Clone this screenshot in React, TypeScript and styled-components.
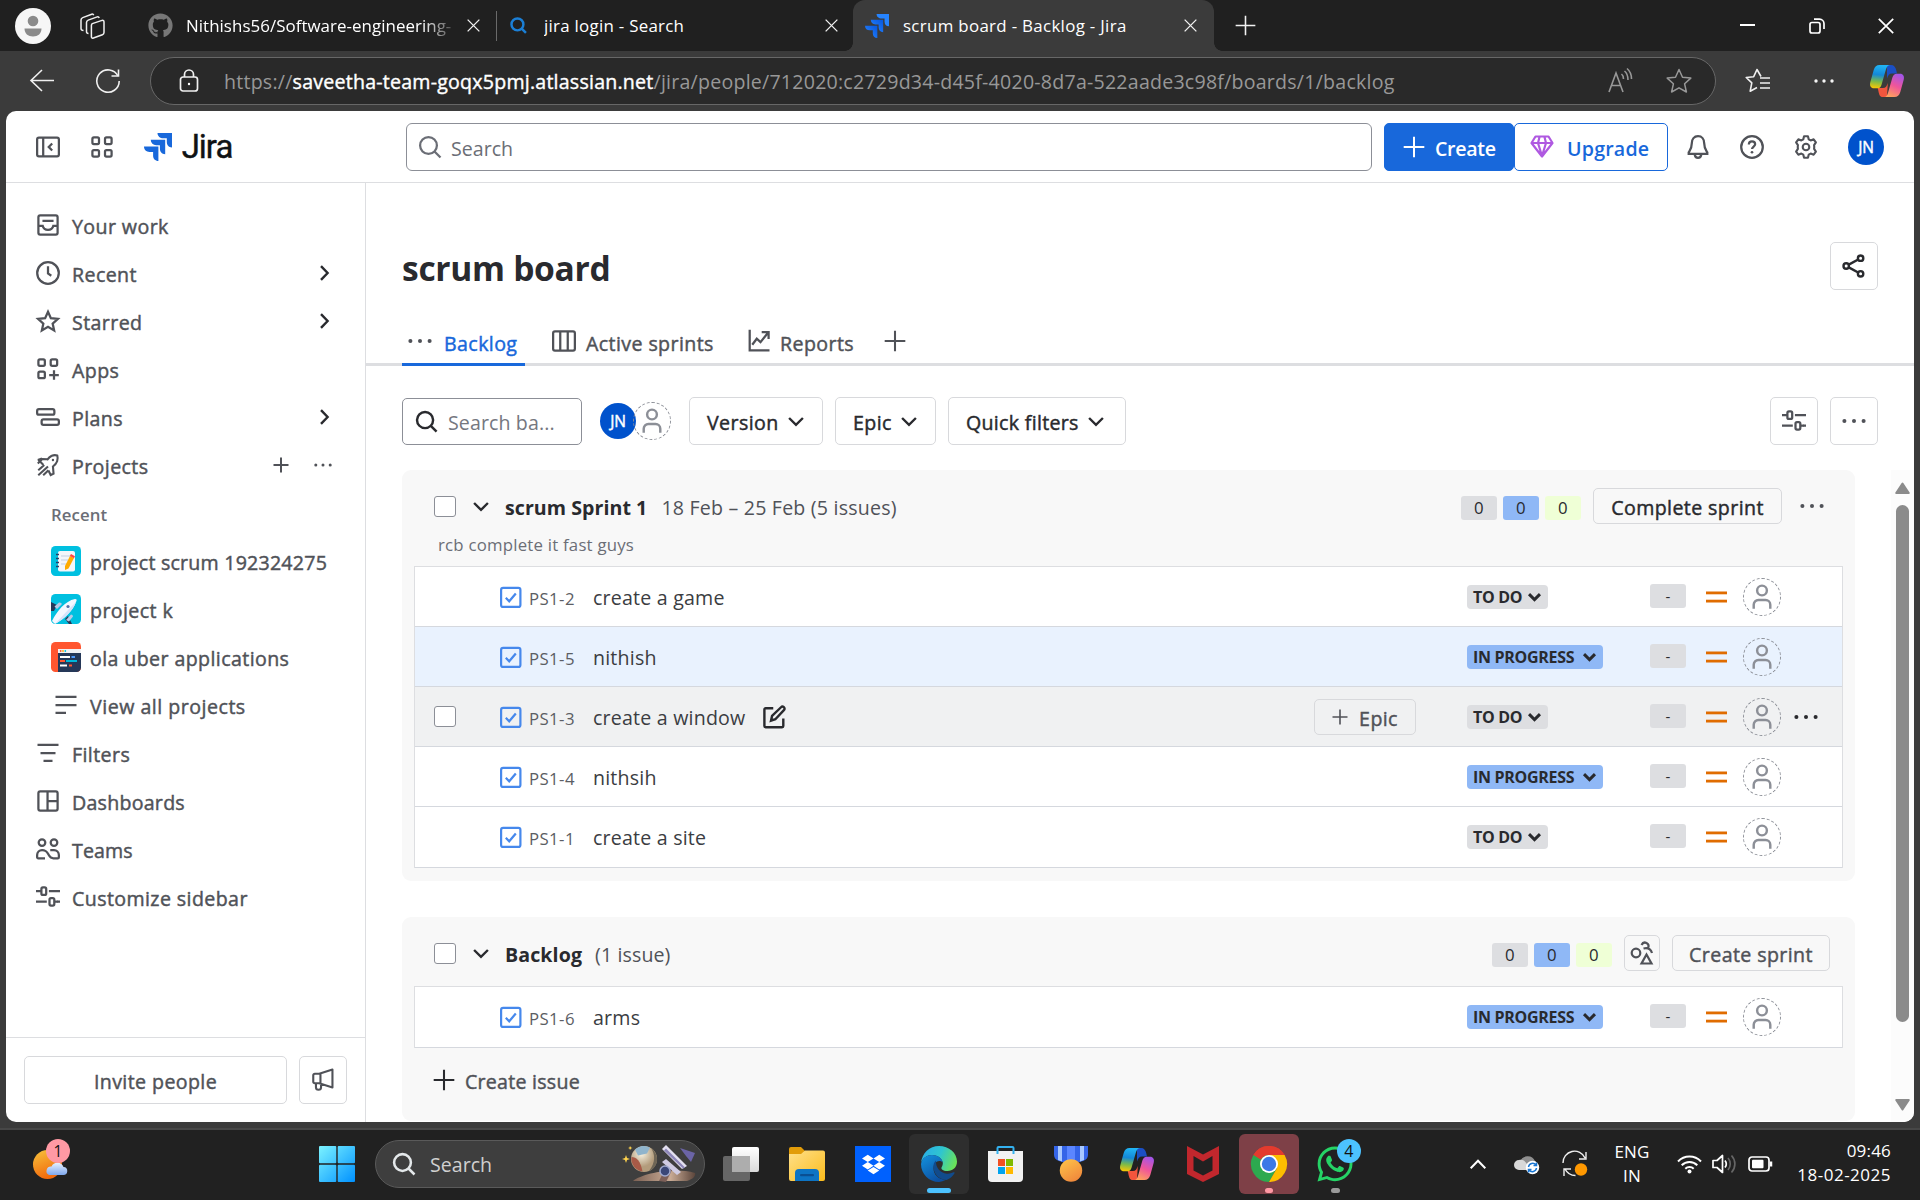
import React from "react";
import styled, { createGlobalStyle, css } from "styled-components";
import { FaGithub, FaWhatsapp, FaDropbox } from "react-icons/fa";

const GlobalStyle = createGlobalStyle`
  *, *::before, *::after { box-sizing: border-box; }
  body { margin: 0; background: #202020; }
  #root { font-family: "Open Sans", "Noto Sans", sans-serif; }
`;

/* ---------- primitives ---------- */

const Desktop = styled.div`
  width: 1920px;
  height: 1200px;
  overflow: hidden;
  display: flex;
  flex-direction: column;
  background: #3b3b3b;
  color: #292a2e;
`;

type TextProps = { $size?: number; $weight?: number; $color?: string; $ls?: number; $drop?: number };
/* Weight 500 is drawn as the regular face with a hairline stroke, since the family has no medium cut. */
const Text = styled.span<TextProps>`
  font-size: ${(p) => p.$size ?? 19.6}px;
  font-weight: ${(p) => p.$weight ?? 500};
  color: ${(p) => p.$color ?? "inherit"};
  letter-spacing: ${(p) => p.$ls ?? ((p.$weight ?? 500) === 500 ? 0.4 : 0.2)}px;
  -webkit-text-stroke: ${(p) => ((p.$weight ?? 500) === 500 ? 0.45 : 0)}px currentColor;
  padding-top: ${(p) => p.$drop ?? 4}px;
  line-height: 26px;
  white-space: pre;
  flex: none;
`;

const Slot = styled.div<{ $w: number; $ml?: number; $h?: number }>`
  width: ${(p) => p.$w}px;
  height: ${(p) => (p.$h ? p.$h + "px" : "auto")};
  margin-left: ${(p) => p.$ml ?? 0}px;
  flex: none;
  display: flex;
  align-items: center;
  justify-content: center;
`;

const Push = styled.div`
  flex: 1;
`;

const Svg = styled.svg`
  display: block;
  flex: none;
  overflow: visible;
`;

type IconProps = { size?: number; color?: string; sw?: number; children?: React.ReactNode };
const Icon16 = ({ size = 24, color = "#505258", sw = 1.5, children }: IconProps) => (
  <Svg width={size} height={size} viewBox="0 0 16 16" fill="none" stroke={color} strokeWidth={sw}>
    {children}
  </Svg>
);

const PlusIcon = ({ size = 22, color = "#505258", sw = 1.5 }: IconProps) => (
  <Icon16 size={size} color={color} sw={sw}><path d="M8 0.5v15M0.5 8h15" /></Icon16>
);
const DotsIcon = ({ color = "#505258", size = 24 }: IconProps) => (
  <Icon16 size={size} color="none">
    <g fill={color}><circle cx="1.6" cy="8" r="1.35" /><circle cx="8" cy="8" r="1.35" /><circle cx="14.4" cy="8" r="1.35" /></g>
  </Icon16>
);
const ChevronDown = ({ size = 24, color = "#292a2e", sw = 1.6 }: IconProps) => (
  <Icon16 size={size} color={color} sw={sw}><path d="M3.4 6l4.6 4.6L12.6 6" /></Icon16>
);
const ChevronRight = () => (
  <Icon16 color="#292a2e" sw={1.6}><path d="M6 3.4l4.4 4.6L6 12.6" /></Icon16>
);
const SearchIcon = ({ color = "#505258", size = 24, sw = 1.5 }: IconProps) => (
  <Icon16 size={size} color={color} sw={sw}><circle cx="7" cy="7" r="5.6" /><path d="M11 11l4 4" /></Icon16>
);
const SlidersIcon = () => (
  <Icon16><rect x="3.6" y="1.6" width="3.2" height="5" rx="1" /><path d="M0 4.1h3.6M8.6 4.1H16M0 11.1h7.2M14 11.1h2" /><rect x="9" y="8.7" width="3.2" height="5" rx="1" /><path d="M12.4 11.1h2" /></Icon16>
);
const PersonIcon = ({ color = "#8c8f97" }: IconProps) => (
  <Icon16 color={color} size={26}><circle cx="8" cy="4" r="3" /><path d="M2.9 15.2v-2.4a2.9 2.9 0 0 1 2.9-2.9h4.4a2.9 2.9 0 0 1 2.9 2.9v2.4" /></Icon16>
);
const CloseIcon = ({ size = 13, color = "#f2f2f2", sw = 1.6 }: IconProps) => (
  <Icon16 size={size} color={color} sw={sw}><path d="M0.8 0.8l14.4 14.4M15.2 0.8L0.8 15.2" /></Icon16>
);

const JiraMark = ({ size, id }: { size: number; id?: string }) => (
  <Svg width={size} height={size} viewBox="0 0 28 28">
    <defs>
      <linearGradient id={id ?? "jm"} x1="1" y1="0" x2="0" y2="1">
        <stop offset="0.1" stopColor={id ? "#0a5be0" : "#1868db"} /><stop offset="0.9" stopColor={id ? "#2684ff" : "#1868db"} />
      </linearGradient>
    </defs>
    <path d="M13.5 0H28v14.4c-3.5 0-5.2-2.6-5.2-5.4V5.3h-3.6C16.2 5.3 13.5 3.3 13.5 0z" fill={id ? "#2684ff" : "#1868db"} />
    <path d="M6.8 6.8h14.4v14.4c-3.4 0-5.3-2.5-5.3-5.4v-3.6h-3.7C9.3 12.2 6.8 10 6.8 6.8z" fill={`url(#${id ?? "jm"})`} />
    <path d="M0 13.6h14.4V28c-3.3 0-5.3-2.5-5.3-5.3V19H5.5C2.4 19 0 16.9 0 13.6z" fill={`url(#${id ?? "jm"})`} />
  </Svg>
);

const CopilotMark = ({ size, id }: { size: number; id: string }) => (
  <Svg width={size} height={size} viewBox="0 0 34 32">
    <defs>
      <linearGradient id={id + "a"} x1="0.3" y1="0" x2="0.2" y2="1">
        <stop offset="0" stopColor="#20b4f4" /><stop offset="0.4" stopColor="#1488d8" /><stop offset="0.7" stopColor="#7cba4a" /><stop offset="1" stopColor="#ffc800" />
      </linearGradient>
      <linearGradient id={id + "b"} x1="0.7" y1="0" x2="0.3" y2="1">
        <stop offset="0" stopColor="#a455e8" /><stop offset="0.5" stopColor="#f0559a" /><stop offset="1" stopColor="#ffa35c" />
      </linearGradient>
    </defs>
    <path d="M17 0h4c3 0 4.5 2 5.2 5l.8 3.5h-5c-3 0-4 2-5 5z" fill="#1b4fc4" />
    <path d="M17 32h-4c-3 0-3.7-2-4.4-5l-.8-4h5c3 0 4-2 5-5z" fill="#f2553d" />
    <path d="M9.5 0H20c-2.5 0-3.4 2.3-4.1 4.6l-4.3 14.8c-.8 2.6-2 3.9-4.6 3.9H4c-3.2 0-4.6-2.5-3.7-6L3.7 5C4.8 1.500 6.500 0 9.500 0z" fill={`url(#${id}a)`} />
    <path d="M24.5 32H14c2.5 0 3.4-2.3 4.1-4.6l4.3-14.8c.8-2.6 2-3.9 4.6-3.9h3c3.2 0 4.6 2.5 3.7 6L30.3 27c-1.1 3.5-2.8 5-5.8 5z" fill={`url(#${id}b)`} />
  </Svg>
);

/* ---------- browser tab strip ---------- */

const TabStrip = styled.header`
  height: 51px;
  flex: none;
  display: flex;
  align-items: center;
  background: #202020;
  color: #fff;
`;
const ProfileCircle = styled.div`
  width: 36px;
  height: 36px;
  border-radius: 50%;
  background: #f6f6f6;
  display: flex;
  align-items: center;
  justify-content: center;
`;
const BrowserTab = styled.div<{ $w: number; $active?: boolean }>`
  width: ${(p) => p.$w}px;
  height: 51px;
  display: flex;
  align-items: center;
  flex: none;
  position: relative;
  ${(p) =>
    p.$active &&
    css`
      background: #3b3b3b;
      border-radius: 12px 12px 0 0;
      &::before, &::after {
        content: "";
        position: absolute;
        bottom: 0;
        width: 8px;
        height: 8px;
      }
      &::before { left: -8px; background: radial-gradient(circle at 0 0, transparent 7.5px, #3b3b3b 8px); }
      &::after { right: -8px; background: radial-gradient(circle at 100% 0, transparent 7.5px, #3b3b3b 8px); }
    `}
`;
const TabTitle = styled(Text)<{ $w: number; $fade?: boolean }>`
  width: ${(p) => p.$w}px;
  overflow: hidden;
  ${(p) => p.$fade && css`mask-image: linear-gradient(to right, #000 88%, transparent 102%);`}
`;
const TabDivider = styled.div`
  width: 1px;
  height: 30px;
  background: #6a6a6a;
`;

const BrowserTabs = () => (
  <TabStrip>
    <Slot $w={36} $ml={15}>
      <ProfileCircle>
        <Svg width={18} height={22} viewBox="0 0 18 22" fill="#8a8a8a"><circle cx="9" cy="6" r="5.3" /><path d="M.5 13.5h17c0 5-3.5 8-8.5 8s-8.5-3-8.5-8z" /></Svg>
      </ProfileCircle>
    </Slot>
    <Slot $w={26} $ml={28}>
      <Svg width={26} height={28} viewBox="0 0 26 28" fill="none" stroke="#f0f0f0" strokeWidth="1.5" strokeLinejoin="round">
        <path d="M13.300 11.600l9.700-3.200q2-.5 2 1.500v10.500q0 1.700-1.600 2.300l-9 3.300q-2 .6-2-1.500V13.500q0-1.400.9-1.900z" />
        <path d="M9.500 21.500q-2 0-2-2V10.500q0-1.800 1.700-2.400l9-3.200q1.500-.4 2 1" />
        <path d="M4.500 18.500q-2.500 0-2.500-2V8q0-1.800 1.700-2.400l9-3.400q1.500-.4 2 1" />
      </Svg>
    </Slot>
    <Slot $w={1} />
    <BrowserTab $w={354}>
      <Slot $w={26} $ml={41}><FaGithub size={25} color="#777" /></Slot>
      <Slot $w={13} />
      <TabTitle $w={268} $fade $size={16.9} $weight={400} $ls={0.05} $drop={0}>Nithishs56/Software-engineering-</TabTitle>
      <Slot $w={13} $ml={13}><CloseIcon /></Slot>
    </BrowserTab>
    <Slot $w={1} $ml={36}><TabDivider /></Slot>
    <BrowserTab $w={356}>
      <Slot $w={18} $ml={12}><SearchIcon size={17} color="#1b7fd6" sw={2.3} /></Slot>
      <Slot $w={17} />
      <TabTitle $w={269} $size={16.9} $weight={400} $ls={0.27} $drop={0}>jira login - Search</TabTitle>
      <Slot $w={13} $ml={12}><CloseIcon /></Slot>
    </BrowserTab>
    <BrowserTab $w={361} $active>
      <Slot $w={24} $ml={12}><JiraMark size={24} id="tabjira" /></Slot>
      <Slot $w={14} />
      <TabTitle $w={269} $size={16.9} $weight={400} $ls={0.31} $drop={0}>scrum board - Backlog - Jira</TabTitle>
      <Slot $w={13} $ml={12}><CloseIcon /></Slot>
    </BrowserTab>
    <Slot $w={22} $ml={20}><PlusIcon size={21} color="#f2f2f2" sw={1.2} /></Slot>
    <Push />
    <Slot $w={16}><Svg width={16} height={4}><rect y="0" width="15" height="2" fill="#fff" /></Svg></Slot>
    <Slot $w={16} $ml={53}>
      <Svg width={16} height={16} viewBox="0 0 16 16" fill="none" stroke="#fff" strokeWidth="1.7"><rect x="1" y="4.5" width="10" height="10.5" rx="2" /><path d="M5 1.2h5.500c2.600 0 4.500 2 4.500 4.500V11" /></Svg>
    </Slot>
    <Slot $w={16} $ml={53} style={{ marginRight: 26 }}><CloseIcon size={16} sw={1.7} color="#fff" /></Slot>
  </TabStrip>
);

/* ---------- address bar ---------- */

const Toolbar = styled.div`
  height: 60px;
  flex: none;
  display: flex;
  align-items: center;
`;
const AddressPill = styled.div`
  width: 1566px;
  height: 48px;
  margin-left: 30px;
  display: flex;
  align-items: center;
  background: #292929;
  border: 1px solid #676767;
  border-radius: 24px;
`;
const Url = styled(Text)`
  b { font-weight: 400; color: #fff; -webkit-text-stroke: 0.4px #fff; }
`;

const AddressBar = () => (
  <Toolbar>
    <Slot $w={24} $ml={30}>
      <Svg width={24} height={24} viewBox="0 0 24 24" fill="none" stroke="#f0f0f0" strokeWidth="1.6"><path d="M24 11.500H1M12 1L1 11.500 12 22" /></Svg>
    </Slot>
    <Slot $w={24} $ml={42}>
      <Svg width={24} height={24} viewBox="0 0 24 24" fill="none" stroke="#f0f0f0" strokeWidth="1.6"><path d="M22 7A11.200 11.200 0 1 0 23.200 12" /><path d="M22.500 .5V7h-7" /></Svg>
    </Slot>
    <AddressPill>
      <Slot $w={20} $ml={28}>
        <Svg width={20} height={24} viewBox="0 0 20 24" fill="none" stroke="#f0f0f0" strokeWidth="1.7"><rect x="1.500" y="8" width="17" height="14" rx="2.500" /><path d="M5.500 8V5.500a4.500 4.500 0 0 1 9 0V8" /><circle cx="10" cy="15" r="1.200" fill="#fff" stroke="none" /></Svg>
      </Slot>
      <Slot $w={25} />
      <Url $size={19.6} $weight={400} $color="#989898" $ls={0.22} $drop={1}>
        https://<b>saveetha-team-goqx5pmj.atlassian.net</b>/jira/people/712020:c2729d34-d45f-4020-8d7a-522aade3c98f/boards/1/backlog
      </Url>
      <Push />
      <Slot $w={24}>
        <Svg width={24} height={24} viewBox="0 0 24 24" fill="none" stroke="#989898" strokeWidth="1.6"><path d="M1 23L8 4l7 19M3.500 16.500h9M13.500 5c1.500 1.200 2 3 2 5M16.500 2c2.500 2 3.500 5 3.500 9M19-.5c3 2.500 4.500 6 4.500 10.500" /></Svg>
      </Slot>
      <Slot $w={26} $ml={34} style={{ marginRight: 23 }}>
        <Svg width={26} height={26} viewBox="0 0 26 26" fill="none" stroke="#989898" strokeWidth="1.5" strokeLinejoin="round"><path d="M13 1.500l3.500 7.700 8.300.9-6.200 5.700 1.800 8.200L13 19.800 5.600 24l1.800-8.200-6.200-5.700 8.300-.9z" /></Svg>
      </Slot>
    </AddressPill>
    <Slot $w={26} $ml={29}>
      <Svg width={26} height={26} viewBox="0 0 26 26" fill="none" stroke="#f0f0f0" strokeWidth="1.6" strokeLinejoin="round"><path d="M16 8.500L12 1.500 8.700 8.700l-7.500.8 5.600 5.300-1.600 8.400L12 19.500" /><path d="M15 10h10M15 15h10M15 20h10" /></Svg>
    </Slot>
    <Slot $w={22} $ml={42}><DotsIcon size={20} color="#f5f5f5" /></Slot>
    <Slot $w={34} $ml={35}><CopilotMark size={34} id="cpa" /></Slot>
  </Toolbar>
);

/* ---------- page shell ---------- */

const Page = styled.div`
  width: 1908px;
  height: 1011px;
  margin-left: 6px;
  flex: none;
  background: #fff;
  border-radius: 10px;
  overflow: hidden;
  display: flex;
  flex-direction: column;
`;
const AppHeader = styled.div`
  height: 72px;
  flex: none;
  display: flex;
  align-items: center;
  border-bottom: 1px solid #dddee1;
`;
const Wordmark = styled.span`
  font-family: Roboto, "Liberation Sans", sans-serif;
  font-size: 33px;
  font-weight: 400;
  letter-spacing: -1px;
  line-height: 36px;
  color: #101214;
  -webkit-text-stroke: 0.4px #101214;
`;
const GlobalSearch = styled.div`
  width: 966px;
  height: 48px;
  margin-left: 174px;
  padding-left: 11px;
  display: flex;
  align-items: center;
  gap: 9px;
  border: 1px solid #8c8f97;
  border-radius: 6px;
`;
const HeaderButton = styled.div<{ $primary?: boolean; $w: number }>`
  width: ${(p) => p.$w}px;
  height: 48px;
  display: flex;
  align-items: center;
  flex: none;
  border: 1px solid #1868db;
  border-radius: 5px;
  background: ${(p) => (p.$primary ? "#1868db" : "#fff")};
  color: ${(p) => (p.$primary ? "#fff" : "#1868db")};
`;
const Avatar = styled.div`
  width: 36px;
  height: 36px;
  flex: none;
  display: flex;
  align-items: center;
  justify-content: center;
  border-radius: 50%;
  background: #0052cc;
  color: #fff;
`;

const TopNav = () => (
  <AppHeader>
    <Slot $w={24} $ml={30}><Icon16><rect x=".75" y="1.750" width="14.500" height="12.500" rx="1.200" /><path d="M4.800 2v12M10.800 5.700L8.500 8l2.300 2.300" /></Icon16></Slot>
    <Slot $w={24} $ml={30}>
      <Icon16><rect x="1.600" y="1.600" width="4.400" height="4.400" rx="1" /><rect x="10" y="1.600" width="4.400" height="4.400" rx="1" /><rect x="1.600" y="10" width="4.400" height="4.400" rx="1" /><rect x="10" y="10" width="4.400" height="4.400" rx="1" /></Icon16>
    </Slot>
    <Slot $w={28} $ml={30}><JiraMark size={28} /></Slot>
    <Slot $w={50} $ml={10}><Wordmark>Jira</Wordmark></Slot>
    <GlobalSearch>
      <SearchIcon color="#6b6e76" />
      <Text $weight={400} $ls={0} $color="#6b6e76">Search</Text>
    </GlobalSearch>
    <Slot $w={12} />
    <HeaderButton $primary $w={130}>
      <Slot $w={22} $ml={18}><PlusIcon size={22} color="#fff" /></Slot>
      <Slot $w={10} />
      <Text $weight={600} $ls={-0.3}>Create</Text>
    </HeaderButton>
    <HeaderButton $w={154}>
      <Slot $w={24} $ml={15}>
        <Svg width={24} height={24} viewBox="0 0 24 24" fill="none" stroke="#af59e1" strokeWidth="2.2" strokeLinejoin="round"><path d="M5.500 1.500h13l4 6.500L12 21.500 1.500 8zM1.500 8h21M9.500 2L8 8l4 13M14.500 2L16 8l-4 13" /></Svg>
      </Slot>
      <Slot $w={13} />
      <Text $weight={600} $ls={0.2}>Upgrade</Text>
    </HeaderButton>
    <Slot $w={24} $ml={18}><Icon16><path d="M8 .8c2.600 0 4.100 1.900 4.100 4.600 0 3.300.9 4.300 2.100 6.200v1H1.800v-1c1.200-1.900 2.100-2.900 2.100-6.200C3.900 2.700 5.400.8 8 .8zM5.800 13c.2 1.500 1 2.200 2.200 2.200s2-.7 2.200-2.200" /></Icon16></Slot>
    <Slot $w={24} $ml={30}><Icon16><circle cx="8" cy="8" r="7.200" /><path d="M5.900 6.400c0-1.300.9-2.100 2.100-2.100s2.100.8 2.100 1.900c0 1.500-2.100 1.500-2.100 3.200" /><circle cx="8" cy="11.500" r=".9" fill="#505258" stroke="none" /></Icon16></Slot>
    <Slot $w={24} $ml={30}>
      <Icon16 sw={1.4}><path strokeLinejoin="round" d="M6.700 .8h2.600l.5 2.100 1.300.7 2-.7 1.500 2-1.200 1.800.1 1.300-.1 1.300 1.200 1.800-1.500 2-2-.7-1.300.7-.5 2.100H6.700l-.5-2.100-1.300-.7-2 .7-1.500-2 1.200-1.800L2.500 8l.1-1.300L1.400 4.900l1.500-2 2 .7 1.300-.7z" /><circle cx="8" cy="8" r="2.200" /></Icon16>
    </Slot>
    <Slot $w={36} $ml={30}><Avatar><Text $size={15.5} $ls={-0.2} $drop={0}>JN</Text></Avatar></Slot>
  </AppHeader>
);

const Body = styled.div`
  flex: 1;
  display: flex;
  min-height: 0;
`;

/* ---------- sidebar ---------- */

const Sidebar = styled.nav`
  width: 360px;
  flex: none;
  display: flex;
  flex-direction: column;
  padding-top: 18px;
  border-right: 1px solid #dddee1;
  color: #505258;
`;
const NavItem = styled.div<{ $nested?: boolean }>`
  height: 48px;
  flex: none;
  display: flex;
  align-items: center;
  padding-left: ${(p) => (p.$nested ? 45 : 30)}px;
  padding-right: 29px;
`;
const NavIcon = styled.div<{ $w: number; $gap: number }>`
  width: ${(p) => p.$w}px;
  margin-right: ${(p) => p.$gap}px;
  display: flex;
  justify-content: center;
`;
const SidebarFooter = styled.div`
  height: 85px;
  margin-top: auto;
  flex: none;
  display: flex;
  align-items: center;
  gap: 12px;
  padding: 0 18px;
  border-top: 1px solid #dddee1;
`;
const OutlineButton = styled.div<{ $w: number; $h?: number; $radius?: number; $color?: string }>`
  width: ${(p) => p.$w}px;
  height: ${(p) => p.$h ?? 48}px;
  flex: none;
  display: flex;
  align-items: center;
  justify-content: center;
  border: 1px solid #d8d9dc;
  border-radius: ${(p) => p.$radius ?? 5}px;
  color: ${(p) => p.$color ?? "#292a2e"};
`;

const NavRow = ({ label, icon, nested, right, ls }: { label: string; icon: React.ReactNode; nested?: boolean; right?: React.ReactNode; ls?: number }) => (
  <NavItem $nested={nested}>
    <NavIcon $w={nested ? 30 : 24} $gap={nested ? 9 : 12}>{icon}</NavIcon>
    <Text $ls={ls}>{label}</Text>
    <Push />
    {right}
  </NavItem>
);

const NotebookTile = () => (
  <Svg width={30} height={30} viewBox="0 0 30 30"><rect width="30" height="30" rx="4.500" fill="#00c0e0" /><rect x="7" y="5" width="17" height="20.500" rx="2" fill="#f4f6fa" /><path d="M10 10h9M10 14h7M10 18h6" stroke="#c3cfe2" strokeWidth="1" /><path d="M5 8.500h3M5 12.500h3M5 16.500h3M5 20.500h3" stroke="#26406b" strokeWidth="1.400" /><path d="M19 10l4 2-5.500 10.500-3.500 1.500v-4z" fill="#ffab00" /><path d="M20 8l4 2.200-1 2-4.200-2.200z" fill="#ff4545" /></Svg>
);
const RocketTile = () => (
  <Svg width={30} height={30} viewBox="0 0 30 30">
    <defs><clipPath id="tileclip"><rect width="30" height="30" rx="4.500" /></clipPath></defs>
    <g clipPath="url(#tileclip)"><rect width="30" height="30" fill="#00c0e0" /><path d="M0 8l6 3-3 6-3 0zM17 22l4 8h-3l-4-5z" fill="#253858" /><path d="M3.500 12.500l4.500-4q2-.5 3 1.500l-5 5zM15 26l5-5.500q2 0 2 2l-4 5z" fill="#b9c9e6" /><path d="M1 27C6 17 14 7 24 5c2 0 2 1 1 3C22 17 13 25 4 30z" fill="#f4f7ff" /><path d="M4 30c9-5 18-13 21-22l-8 8z" fill="#d6e2fa" /><circle cx="17" cy="12.500" r="1.600" fill="#5470a8" /></g>
  </Svg>
);
const CodeTile = () => (
  <Svg width={30} height={30} viewBox="0 0 30 30">
    <g clipPath="url(#tileclip)"><rect width="30" height="30" fill="#ff5630" /><rect x="7" y="7" width="23" height="23" fill="#253858" /><rect x="7" y="7" width="23" height="4" fill="#f0f2f5" /><circle cx="9.700" cy="9" r=".9" fill="#ff5630" /><circle cx="12" cy="9" r=".9" fill="#ffab00" /><circle cx="14.300" cy="9" r=".9" fill="#00c0e0" /><path d="M9 15h10M9 23.500h7" stroke="#fff" strokeWidth="1.800" /><path d="M20.500 15h3.500" stroke="#4c9aff" strokeWidth="1.800" /><path d="M9 19h5M18 23.500h3" stroke="#ff5630" strokeWidth="1.800" /><path d="M15 19h11" stroke="#00b8d9" strokeWidth="1.800" /></g>
  </Svg>
);

const SideNav = () => (
  <Sidebar>
    <NavRow label="Your work" icon={<Icon16><rect x="1.600" y="1.600" width="12.800" height="12.800" rx="1.200" /><path d="M4.300 5.200h7.400M1.600 8.600h2.900c.4 1.600 1.600 2.600 3.500 2.600s3.100-1 3.500-2.600h2.900" /></Icon16>} />
    <NavRow label="Recent" right={<ChevronRight />} icon={<Icon16><circle cx="8" cy="8" r="7.200" /><path d="M8 3.500V8.300l2.200 1.500" /></Icon16>} />
    <NavRow label="Starred" right={<ChevronRight />} icon={<Icon16><path d="M8 1.800l1.900 4.300 4.700.5-3.500 3.100 1 4.600L8 11.900l-4.100 2.400 1-4.600L1.400 6.600l4.700-.5z" /></Icon16>} />
    <NavRow label="Apps" icon={<Icon16><rect x="1.600" y="1.600" width="4.300" height="4.300" rx="1" /><rect x="9.800" y="1.600" width="4.300" height="4.300" rx="1" /><rect x="1.600" y="9.800" width="4.300" height="4.300" rx="1" /><path d="M12 8.800v6.400M8.800 12h6.400" /></Icon16>} />
    <NavRow label="Plans" right={<ChevronRight />} icon={<Icon16><rect x=".75" y="2.750" width="11.500" height="3.700" rx="1.200" /><rect x="3.750" y="9.550" width="11.500" height="3.700" rx="1.200" /></Icon16>} />
    <NavRow
      label="Projects"
      icon={<Icon16 sw={1.4}><path d="M10.500 1.800c1.500-.5 2.800-.4 3.700-.1.300 1 .4 2.300-.1 3.800-.5 1.400-1.600 2.600-2.800 3.500l.4 4.800-1.900.9-1.500-3M1.200 7l3-3 4 .2M1.500 4.500L5 8M1.200 4.700L4 3.600M1.500 11.500L5.500 8M1.500 14.800L8 9M4.800 14.800L8.300 11.500M7.300 4.700c1-1.300 2-2.300 3.200-2.900" /><circle cx="11.300" cy="4.700" r=".8" fill="#505258" stroke="none" /></Icon16>}
      right={<><PlusIcon size={16} sw={2} /><Slot $w={24} /><Slot $w={20} style={{ marginRight: 3 }}><DotsIcon size={18} /></Slot></>}
    />
    <NavItem $nested><Text $size={16.8} $weight={600} $ls={0.1} $drop={3} $color="#6b6e76">Recent</Text></NavItem>
    <NavRow nested label="project scrum 192324275" ls={0.22} icon={<NotebookTile />} />
    <NavRow nested label="project k" icon={<RocketTile />} />
    <NavRow nested label="ola uber applications" icon={<CodeTile />} />
    <NavRow nested label="View all projects" ls={0.5} icon={<Icon16><path d="M1 2.600h14M1 8h14M1 13.300h7" /></Icon16>} />
    <NavRow label="Filters" icon={<Icon16><path d="M1 2.600h14M3 8h10M5 13.300h6" /></Icon16>} />
    <NavRow label="Dashboards" ls={0.25} icon={<Icon16><rect x="1.600" y="1.600" width="12.800" height="12.800" rx="1.200" /><path d="M7.700 1.600v12.800M7.700 8h6.700" /></Icon16>} />
    <NavRow label="Teams" ls={0.1} icon={<Icon16><circle cx="4" cy="3.700" r="2.200" /><circle cx="12" cy="3.700" r="2.200" /><path d="M6 14.200H1.500a.75.75 0 0 1-.75-.75v-1.500A3.300 3.300 0 0 1 4 8.700c3.200 0 3.600 1.700 4.600 3.500.9 1.600 1.700 2 3 2h2.900c.4 0 .75-.3.75-.75v-1.500A3.300 3.300 0 0 0 12 8.700H9.500" /></Icon16>} />
    <NavRow label="Customize sidebar" icon={<SlidersIcon />} />
    <SidebarFooter>
      <OutlineButton $w={263} $color="#505258"><Text>Invite people</Text></OutlineButton>
      <OutlineButton $w={48}>
        <Icon16 sw={1.4}><path strokeLinejoin="round" d="M2.500 3.800h3L14.300 1v12L5.500 10.200h-3a1 1 0 0 1-1-1V4.800a1 1 0 0 1 1-1zM6.300 3.800v6.400M3.300 10.200v2.600c0 1 .7 1.700 1.700 1.700s1.700-.7 1.700-1.700v-2.300" /></Icon16>
      </OutlineButton>
    </SidebarFooter>
  </Sidebar>
);

/* ---------- board header ---------- */

const Main = styled.main`
  flex: 1;
  min-width: 0;
  display: flex;
  flex-direction: column;
  padding-top: 59px;
`;
const TitleRow = styled.div`
  height: 48px;
  flex: none;
  display: flex;
  align-items: center;
  justify-content: space-between;
  padding: 0 36px;
`;
const Tabs = styled.div`
  height: 48px;
  flex: none;
  display: flex;
  align-items: center;
  margin-top: 28px;
  padding-left: 36px;
  color: #505258;
  box-shadow: inset 0 -3px #dddee1;
  ${Text} { padding-top: 6px; }
`;
const Tab = styled.div<{ $active?: boolean; $w: number }>`
  width: ${(p) => p.$w}px;
  height: 48px;
  display: flex;
  align-items: center;
  border-bottom: 3px solid ${(p) => (p.$active ? "#1868db" : "transparent")};
  color: ${(p) => (p.$active ? "#1868db" : "inherit")};
`;
const FilterRow = styled.div`
  height: 48px;
  flex: none;
  display: flex;
  align-items: center;
  margin-top: 31px;
  padding: 0 36px;
`;
const BacklogSearch = styled.div`
  width: 180px;
  height: 47px;
  margin-top: 1px;
  padding-left: 12px;
  display: flex;
  align-items: center;
  gap: 10px;
  border: 1px solid #8c8f97;
  border-radius: 5px;
`;
const Unassigned = styled.div`
  width: 38px;
  height: 38px;
  flex: none;
  display: flex;
  align-items: center;
  justify-content: center;
  border: 1px dashed #8c8f97;
  border-radius: 50%;
`;
const FilterButton = styled(OutlineButton)`
  margin-right: 12px;
  justify-content: flex-start;
  padding-left: 17px;
  gap: 5px;
`;

const BoardHeader = () => (
  <>
    <TitleRow>
      <Text $size={33.6} $weight={700} $ls={-0.3} $drop={4}>scrum board</Text>
      <OutlineButton $w={48}>
        <Icon16 color="#292a2e" sw={1.6}><circle cx="2.800" cy="8" r="1.800" /><circle cx="12.400" cy="2.800" r="1.800" /><circle cx="12.400" cy="13.200" r="1.800" /><path d="M4.500 7.100l6.300-3.400M4.500 8.900l6.300 3.400" /></Icon16>
      </OutlineButton>
    </TitleRow>
    <Tabs>
      <Tab $active $w={123}><Slot $w={24} $ml={6}><DotsIcon /></Slot><Slot $w={12} /><Text>Backlog</Text></Tab>
      <Tab $w={162} style={{ marginLeft: 27 }}>
        <Icon16><rect x=".75" y="1.600" width="14.500" height="12.800" rx="1.200" /><path d="M5.500 1.600v12.800M10.500 1.600v12.800" /></Icon16>
        <Slot $w={10} /><Text>Active sprints</Text>
      </Tab>
      <Tab $w={106} style={{ marginLeft: 33 }}>
        <Icon16><path d="M1.800 .5v13.700H15M3.500 10.500l3-4 2.500 2.300L14 2.500M9.800 2h4.600v4.600" /></Icon16>
        <Slot $w={9} /><Text>Reports</Text>
      </Tab>
      <Tab $w={22} style={{ marginLeft: 31 }}><PlusIcon size={22} /></Tab>
    </Tabs>
    <FilterRow>
      <BacklogSearch><SearchIcon color="#292a2e" size={23} sw={1.7} /><Text $weight={400} $ls={0.1} $drop={2} $color="#75777f">Search ba...</Text></BacklogSearch>
      <Slot $w={36} $ml={18}><Avatar><Text $size={15.5} $ls={-0.2} $drop={0}>JN</Text></Avatar></Slot>
      <Slot $w={38} $ml={-3} style={{ marginRight: 18 }}><Unassigned><PersonIcon /></Unassigned></Slot>
      <FilterButton $w={134}><Text>Version</Text><ChevronDown /></FilterButton>
      <FilterButton $w={101}><Text>Epic</Text><ChevronDown /></FilterButton>
      <FilterButton $w={178}><Text $ls={0.3}>Quick filters</Text><ChevronDown /></FilterButton>
      <Push />
      <OutlineButton $w={48}><SlidersIcon /></OutlineButton>
      <Slot $w={12} />
      <OutlineButton $w={48}><DotsIcon /></OutlineButton>
    </FilterRow>
  </>
);

/* ---------- issue lists ---------- */

const Scroller = styled.div`
  flex: 1;
  min-height: 0;
  margin-top: 25px;
  padding-left: 36px;
  display: flex;
  justify-content: space-between;
`;
const Cards = styled.div`
  width: 1453px;
  display: flex;
  flex-direction: column;
  gap: 36px;
`;
const Card = styled.section<{ $h: number }>`
  height: ${(p) => p.$h}px;
  flex: none;
  padding: 6px 12px 0;
  background: #f8f8f8;
  border-radius: 9px;
`;
const CardHeader = styled.div`
  height: 60px;
  display: flex;
  align-items: center;
  padding-left: 20px;
`;
const Checkbox = styled.div`
  width: 22px;
  height: 21px;
  flex: none;
  background: #fff;
  border: 1.5px solid #8c8f97;
  border-radius: 3px;
`;
const Goal = styled.div`
  height: 30px;
  padding-left: 24px;
  margin-top: -4px;
  margin-bottom: 4px;
`;
const List = styled.div`
  border: 1px solid #dddee1;
  border-bottom: none;
`;
const Row = styled.div<{ $tone: string }>`
  height: 60px;
  display: grid;
  grid-template-columns: 66px 29px 64px 1fr 153px 183px 56px 37px 51px 24px;
  align-items: center;
  padding: 0 24px 0 19px;
  background: ${(p) => p.$tone};
  border-bottom: 1px solid #d5d8de;
  &:last-child { height: 61px; padding-bottom: 1px; }
`;
const Summary = styled.div`
  display: flex;
  align-items: center;
  gap: 17px;
`;
const Status = styled.div<{ $progress: boolean }>`
  width: ${(p) => (p.$progress ? 136 : 81)}px;
  height: 24px;
  padding: 0 8px 0 6px;
  display: flex;
  align-items: center;
  justify-content: space-between;
  background: ${(p) => (p.$progress ? "#8fb8f6" : "#dddee1")};
  border-radius: 4px;
`;
const Badge = styled.div<{ $bg: string; $ml?: number; $mt?: number }>`
  width: 36px;
  height: 24px;
  margin-left: ${(p) => p.$ml ?? 0}px;
  margin-top: ${(p) => p.$mt ?? 3}px;
  flex: none;
  display: flex;
  align-items: center;
  justify-content: center;
  background: ${(p) => p.$bg};
  border-radius: 3px;
`;
const CreateIssue = styled.div`
  height: 64px;
  display: flex;
  align-items: center;
  padding-left: 19px;
  gap: 10px;
`;

type Issue = { id: string; title: string; progress: boolean; tone?: string; hovered?: boolean };

const IssueRow = ({ id, title, progress, tone = "#fff", hovered }: Issue) => (
  <Row $tone={tone}>
    <div>{hovered && <Checkbox />}</div>
    <Svg width={22} height={22} viewBox="0 0 22 22" fill="none" stroke="#4688ec" strokeWidth="2.2"><rect x="1.100" y="1.900" width="19.300" height="19" rx="2" /><path d="M5.800 11.800l3.400 3.500 6.600-7.800" /></Svg>
    <Text $size={16.8} $weight={400} $ls={0.4} $color="#5c5e64">{id}</Text>
    <Summary>
      <Text $color="#3b3d42" $weight={400} $drop={2}>{title}</Text>
      {hovered && (
        <Icon16 color="#292a2e" sw={1.6}><path d="M7.500 2.200H2.400a.8.8 0 0 0-.8.800v11c0 .4.4.8.8.8h11a.8.8 0 0 0 .8-.8V9M6 10.500l.7-3.200 6-5.800c.6-.6 1.300-.5 1.900 0 .6.600.6 1.300 0 1.900L8.900 9.500z" /></Icon16>
      )}
    </Summary>
    <div>
      {hovered && (
        <OutlineButton $w={102} $h={36} $color="#505258"><PlusIcon size={16} sw={1.6} /><Slot $w={11} /><Text>Epic</Text></OutlineButton>
      )}
    </div>
    <Status $progress={progress}>
      <Text $size={16} $weight={700} $ls={-0.3} $drop={0}>{progress ? "IN PROGRESS" : "TO DO"}</Text>
      <Slot $w={12}><ChevronDown size={19} sw={2.5} /></Slot>
    </Status>
    <Badge $bg="#dddee1" $mt={-1}><Text $size={15} $weight={400} $drop={0}>-</Text></Badge>
    <Svg width={21} height={12} viewBox="0 0 21 12" fill="#e06c00"><rect width="21" height="2.800" y=".5" /><rect width="21" height="2.800" y="8.700" /></Svg>
    <Unassigned><PersonIcon /></Unassigned>
    <div>{hovered && <DotsIcon color="#292a2e" />}</div>
  </Row>
);

const sprintIssues: Issue[] = [
  { id: "PS1-2", title: "create a game", progress: false },
  { id: "PS1-5", title: "nithish", progress: true, tone: "#e9f2fe" },
  { id: "PS1-3", title: "create a window", progress: false, tone: "#f0f1f2", hovered: true },
  { id: "PS1-4", title: "nithsih", progress: true },
  { id: "PS1-1", title: "create a site", progress: false },
];

const Estimates = () => (
  <>
    <Badge $bg="#dddee1"><Text $size={16.8} $weight={400} $drop={0}>0</Text></Badge>
    <Badge $bg="#8fb8f6" $ml={6}><Text $size={16.8} $weight={400} $drop={0}>0</Text></Badge>
    <Badge $bg="#efffd6" $ml={6}><Text $size={16.8} $weight={400} $drop={0}>0</Text></Badge>
    <Slot $w={12} />
  </>
);

const ScrollTrack = styled.div`
  width: 23px;
  display: flex;
  flex-direction: column;
  align-items: center;
  padding: 12px 0 11px;
  background: #fcfcfc;
`;
const Thumb = styled.div`
  width: 13px;
  height: 517px;
  margin: 11px 0 auto;
  border-radius: 7px;
  background: #8b8b8b;
`;
const Arrow = ({ down }: { down?: boolean }) => (
  <Svg width={15} height={12} viewBox="0 0 15 12" fill="#8b8b8b" stroke="#8b8b8b" strokeWidth="2" strokeLinejoin="round">
    <path d={down ? "M1.200 1h12.600L7.500 10.500z" : "M1.200 11h12.600L7.500 1.500z"} />
  </Svg>
);

const Board = () => (
  <Scroller>
    <Cards>
      <Card $h={411}>
        <CardHeader>
          <Checkbox />
          <Slot $w={24} $ml={13}><ChevronDown /></Slot>
          <Slot $w={12} />
          <Text $weight={700} $ls={0.05}>scrum Sprint 1</Text>
          <Slot $w={14} />
          <Text $weight={400} $color="#505258">18 Feb – 25 Feb (5 issues)</Text>
          <Push />
          <Estimates />
          <OutlineButton $w={189} $h={36}><Text>Complete sprint</Text></OutlineButton>
          <Slot $w={24} $ml={18} style={{ marginRight: 19 }}><DotsIcon /></Slot>
        </CardHeader>
        <Goal><Text $size={16.8} $weight={400} $ls={0.22} $color="#6b6e76">rcb complete it fast guys</Text></Goal>
        <List>{sprintIssues.map((i) => <IssueRow key={i.id} {...i} />)}</List>
      </Card>
      <Card $h={204}>
        <CardHeader>
          <Checkbox />
          <Slot $w={24} $ml={13}><ChevronDown /></Slot>
          <Slot $w={12} />
          <Text $weight={700} $ls={0.1}>Backlog</Text>
          <Slot $w={13} />
          <Text $weight={400} $ls={0.1} $color="#505258">(1 issue)</Text>
          <Push />
          <Estimates />
          <OutlineButton $w={36} $h={36}>
            <Svg width={22} height={24} viewBox="0 0 22 24" fill="none" stroke="#505258" strokeWidth="2.2"><circle cx="5" cy="12" r="4.300" /><path d="M15.500 13.500l5 9h-10z" /><path d="M10.500 4c1-2 3-3 5-2 2 1 2.500 3 1.500 5M12.500 7.500c4-1 7-.5 8.500 4.500" /></Svg>
          </OutlineButton>
          <Slot $w={12} />
          <OutlineButton $w={158} $h={36} $color="#505258" style={{ marginRight: 13 }}><Text>Create sprint</Text></OutlineButton>
        </CardHeader>
        <Slot $w={1} $h={3} />
        <List><IssueRow id="PS1-6" title="arms" progress /></List>
        <CreateIssue><PlusIcon size={22} color="#292a2e" /><Text $color="#505258" $ls={0.25}>Create issue</Text></CreateIssue>
      </Card>
    </Cards>
    <ScrollTrack><Arrow /><Thumb /><Arrow down /></ScrollTrack>
  </Scroller>
);

/* ---------- taskbar ---------- */

const WindowEdge = styled.div`
  height: 8px;
  flex: none;
  border-bottom: 2px solid #474747;
`;
const TaskbarRoot = styled.footer`
  height: 70px;
  padding-bottom: 2px;
  flex: none;
  display: flex;
  align-items: center;
  background: #212121;
  color: #fff;
`;
const TaskSearch = styled.div`
  width: 330px;
  height: 48px;
  margin-left: 20px;
  padding: 0 7px 0 16px;
  display: flex;
  align-items: center;
  background: #3e3e3e;
  border: 1px solid #5a5a5a;
  border-radius: 24px;
`;
const AppTile = styled.div<{ $bg?: string; $ml?: number }>`
  width: 60px;
  height: 60px;
  margin-left: ${(p) => p.$ml ?? 6}px;
  flex: none;
  display: flex;
  align-items: center;
  justify-content: center;
  position: relative;
  border-radius: 6px;
  background: ${(p) => p.$bg ?? "transparent"};
`;
const Indicator = styled.i<{ $w: number; $c: string }>`
  position: absolute;
  bottom: 1px;
  left: ${(p) => 30 - p.$w / 2}px;
  width: ${(p) => p.$w}px;
  height: 5px;
  border-radius: 3px;
  background: ${(p) => p.$c};
`;
const Notice = styled.div<{ $bg: string; $x: number; $y: number }>`
  position: absolute;
  left: ${(p) => p.$x}px;
  top: ${(p) => p.$y}px;
  width: 24px;
  height: 24px;
  border-radius: 50%;
  display: flex;
  align-items: center;
  justify-content: center;
  background: ${(p) => p.$bg};
  color: #111;
`;
const Stack = styled.div<{ $w: number; $align: string; $up?: number }>`
  width: ${(p) => p.$w}px;
  flex: none;
  padding-bottom: ${(p) => p.$up ?? 0}px;
  display: flex;
  flex-direction: column;
  align-items: ${(p) => p.$align};
  ${Text} { line-height: 24px; }
`;

const Taskbar = () => (
  <TaskbarRoot>
    <AppTile $ml={18}>
      <Svg width={36} height={36} viewBox="0 0 36 36">
        <defs>
          <linearGradient id="sun" x1="0" y1="0" x2=".4" y2="1"><stop offset="0" stopColor="#f7c33c" /><stop offset="1" stopColor="#f26a0c" /></linearGradient>
          <linearGradient id="cloud" x1="0" y1="0" x2="0" y2="1"><stop offset="0" stopColor="#e8f1ff" /><stop offset="1" stopColor="#7ea8ee" /></linearGradient>
        </defs>
        <circle cx="17.500" cy="18.500" r="14.500" fill="url(#sun)" />
        <path d="M19 29h14a4 4 0 0 0 .5-8 6.500 6.500 0 0 0-12-.5A4.500 4.500 0 0 0 19 29z" fill="url(#cloud)" />
      </Svg>
      <Notice $bg="#ff99a4" $x={28} $y={5}><Text $size={15.5} $weight={400} $drop={0}>1</Text></Notice>
    </AppTile>
    <Slot $w={36} $ml={241}>
      <Svg width={36} height={36} viewBox="0 0 36 36">
        <defs><linearGradient id="win" gradientUnits="userSpaceOnUse" x1="0" y1="0" x2="36" y2="36"><stop offset="0" stopColor="#7cf3ff" /><stop offset="1" stopColor="#0091ff" /></linearGradient></defs>
        <g fill="url(#win)"><rect width="17.300" height="17.300" rx="1" /><rect x="18.700" width="17.300" height="17.300" rx="1" /><rect y="18.700" width="17.300" height="17.300" rx="1" /><rect x="18.700" y="18.700" width="17.300" height="17.300" rx="1" /></g>
      </Svg>
    </Slot>
    <TaskSearch>
      <SearchIcon size={24} color="#e4e8ea" sw={1.7} />
      <Slot $w={14} />
      <Text $weight={400} $ls={0} $drop={2} $color="#d0d0d0">Search</Text>
      <Push />
      <Svg width={74} height={38} viewBox="0 0 74 38">
        <defs>
          <radialGradient id="ball" cx=".4" cy=".3"><stop offset="0" stopColor="#f6f2e2" /><stop offset="1" stopColor="#b39c7c" /></radialGradient>
          <linearGradient id="sand" x1="0" y1="0" x2="1" y2="0"><stop offset="0" stopColor="#7a5f52" /><stop offset=".6" stopColor="#c9ab95" /><stop offset="1" stopColor="#5c463c" /></linearGradient>
        </defs>
        <path d="M10 36C20 28 52 22 72 28c1 3-2 6-8 8z" fill="url(#sand)" />
        <circle cx="21" cy="14" r="13" fill="url(#ball)" /><path d="M12 4.500a13 13 0 0 1 15-2l-3 6-9 2z" fill="#8fb4cc" /><path d="M8.500 12c5 0 9 4 11 14.500A13 13 0 0 1 8.500 12z" fill="#a85a47" /><path d="M28 3c4 6 5 14-2 23 10-4 11-16 2-23z" fill="#6f6656" />
        <path d="M39 4l4-4 21 21-5 3z" fill="#e3e0f0" /><path d="M41 5.500l2-2 19 19-2 1z" fill="#8d86b8" /><path d="M39 17l4-3 15 13-4 3z" fill="#cfcbe2" /><path d="M57 3l15 5-4 9-5-6z" fill="#6b64a6" /><path d="M42 24l-6 12 7 1 6-12z" fill="#7c5f58" /><circle cx="42" cy="26" r="5" fill="#3a4778" stroke="#9fa9cf" strokeWidth="1.500" />
        <path d="M3 10l1 3 3 1-3 1-1 3-1-3-3-1 3-1zM7 1l1 1.500 1.500.5-1.500.5-1 1.500-.5-1.500-1.500-.5 1.500-.5z" fill="#ffd34d" />
      </Svg>
    </TaskSearch>
    <AppTile>
      <Svg width={36} height={35} viewBox="0 0 36 35">
        <defs><linearGradient id="tv" x1="0" y1="0" x2="0" y2="1"><stop offset="0" stopColor="#fff" /><stop offset="1" stopColor="#dadada" /></linearGradient></defs>
        <rect y="9" width="27" height="25" rx="2" fill="#666" /><rect x="9" width="27" height="25" rx="2" fill="url(#tv)" /><rect x="9" y="9" width="18" height="16" fill="#adadad" />
      </Svg>
    </AppTile>
    <AppTile>
      <Svg width={36} height={34} viewBox="0 0 36 34">
        <defs><linearGradient id="fold" x1="0" y1="0" x2="1" y2="1"><stop offset="0" stopColor="#ffe08a" /><stop offset="1" stopColor="#fbbc1c" /></linearGradient></defs>
        <path d="M0 2a2 2 0 0 1 2-2h10l4 4v6H0z" fill="#e29c09" /><path d="M0 7h12l4-3.500h18a2 2 0 0 1 2 2V32a2 2 0 0 1-2 2H2a2 2 0 0 1-2-2z" fill="url(#fold)" /><path d="M6 34v-8a4 4 0 0 1 4-4h16a4 4 0 0 1 4 4v8z" fill="#0d74c4" /><rect x="11" y="27" width="14" height="2.200" rx="1" fill="#0a4f92" />
      </Svg>
    </AppTile>
    <AppTile>
      <Slot $w={36} $h={36} style={{ background: "#0061fe" }}><FaDropbox size={23} color="#fff" /></Slot>
    </AppTile>
    <AppTile $bg="#2e2e2e">
      <Svg width={36} height={36} viewBox="0 0 36 36">
        <defs>
          <linearGradient id="eg" x1="0" y1=".3" x2="1" y2=".6"><stop offset="0" stopColor="#29aee8" /><stop offset=".5" stopColor="#2fc5cf" /><stop offset="1" stopColor="#6be356" /></linearGradient>
          <linearGradient id="eb" x1="0" y1="0" x2=".6" y2="1"><stop offset="0" stopColor="#1393df" /><stop offset="1" stopColor="#0c4fa0" /></linearGradient>
        </defs>
        <path d="M0 17C1 7 8.500 0 18 0c10 0 18 7 18 15.500 0 6-4.500 9.500-9.500 9.500-5 0-6.500-2-6-3.500 1-2 1.500-3 1.300-5C21 12 16 9 11 9 6 9 1.500 12 0 17z" fill="url(#eg)" />
        <path d="M0 18C1 12 6 9 11 9c5.500 0 10 3 10.800 7.500C18 13 12.500 16 12.500 22.500c0 6 5 11 12 11.500A18 18 0 0 1 18 36C8 36 0 28 0 18z" fill="url(#eb)" />
        <path d="M15 14.500c-2 1.500-3 4.500-2.500 8C13.500 29 19 34 25.500 34c3.500-1.500 6.500-4 8-6.800.3-.8-.4-1.300-1-.9-2 1-4 1.500-6.500 1.400C19 27 14.500 21.500 15 14.500z" fill="#114b8c" />
      </Svg>
      <Indicator $w={24} $c="#4cc2ff" />
    </AppTile>
    <AppTile>
      <Svg width={35} height={36} viewBox="0 0 35 36">
        <path d="M9.500 7V2a1 1 0 0 1 1-1h14a1 1 0 0 1 1 1v5" fill="none" stroke="#33b1ef" strokeWidth="2" /><path d="M0 5h35v27a4 4 0 0 1-4 4H4a4 4 0 0 1-4-4z" fill="#f2f2f2" /><path d="M9.500 5v3M25.500 5v3" stroke="#33b1ef" strokeWidth="2" />
        <rect x="10" y="13" width="7" height="7" fill="#f25022" /><rect x="18" y="13" width="7" height="7" fill="#7fba00" /><rect x="10" y="21" width="7" height="7" fill="#00a4ef" /><rect x="18" y="21" width="7" height="7" fill="#ffb900" />
      </Svg>
    </AppTile>
    <AppTile>
      <Svg width={36} height={36} viewBox="0 0 36 36">
        <defs><linearGradient id="medal" x1="0" y1="0" x2=".6" y2="1"><stop offset="0" stopColor="#ffc64a" /><stop offset="1" stopColor="#f08a3c" /></linearGradient></defs>
        <path d="M1 0h34v9c0 3-2 5-5 6l-7 2H13l-7-2c-3-1-5-3-5-6z" fill="#3565e8" /><path d="M5 0h4v15.500l-4-1.500zM27 0h4v14l-4 1.500z" fill="#a8c8ff" /><path d="M14 0h8v17h-8z" fill="#5b86ff" /><circle cx="18" cy="24.500" r="11.200" fill="url(#medal)" />
      </Svg>
    </AppTile>
    <AppTile><CopilotMark size={34} id="cpb" /></AppTile>
    <AppTile>
      <Svg width={32} height={36} viewBox="0 0 32 36"><path d="M0 0l16 8.500L32 0v28l-16 8-16-8zM6.500 10v14.500L16 29.500l9.500-5V10L16 15.500z" fill="#c1272d" fillRule="evenodd" /></Svg>
    </AppTile>
    <AppTile $bg="#7e4047">
      <Svg width={36} height={36} viewBox="0 0 36 36">
        <path d="M18 18L2.400 9A18 18 0 0 1 33.600 9z" fill="#e33b2e" /><path d="M18 18L2.400 9A18 18 0 0 0 18 36l7.800-13.500z" fill="#2da94f" /><path d="M18 9h15.600A18 18 0 0 1 18 36l7.800-13.500z" fill="#fdbd00" /><path d="M2.400 9L10.200 22.500 18 18V9z" fill="#2da94f" /><path d="M2.400 9A18 18 0 0 1 33.600 9H18a9 9 0 0 0-8.700 6.500z" fill="#e33b2e" /><path d="M2.400 9L10.200 22.500l1-8z" fill="#2da94f" /><circle cx="18" cy="18" r="9" fill="#fff" /><circle cx="18" cy="18" r="7.200" fill="#3b78e7" />
      </Svg>
      <Indicator $w={8} $c="#ff99a4" />
    </AppTile>
    <AppTile>
      <FaWhatsapp size={40} color="#25d366" />
      <Notice $bg="#4cc2ff" $x={32} $y={5}><Text $size={16} $weight={400} $drop={0}>4</Text></Notice>
      <Indicator $w={9} $c="#9a9a9a" />
    </AppTile>
    <Push />
    <Slot $w={16}><Svg width={16} height={10} viewBox="0 0 16 10" fill="none" stroke="#fff" strokeWidth="2"><path d="M.7 9.200L8 1.700l7.300 7.500" /></Svg></Slot>
    <Slot $w={26} $ml={28}>
      <Svg width={26} height={22} viewBox="0 0 26 22">
        <path d="M6 9A8 8 0 0 1 21 8c2 1 2 4 0 6H8z" fill="#8f8f8f" /><path d="M5 17a5 5 0 0 1 0-10c4-1 6 1 8 4l3 6z" fill="#d8d8d8" /><circle cx="18.500" cy="14.500" r="6.700" fill="#fff" /><path d="M14.500 14a4.200 4.200 0 0 1 7.500-2M22.500 15a4.200 4.200 0 0 1-7.500 2M22.500 9.500v3h-3M14.500 19.500v-3h3" fill="none" stroke="#1976d2" strokeWidth="1.500" />
      </Svg>
    </Slot>
    <Slot $w={26} $ml={22}>
      <Svg width={26} height={26} viewBox="0 0 26 26" fill="none" stroke="#f0f0f0" strokeWidth="1.4"><path d="M1 12A11.500 11.500 0 0 1 23 7M24 1v7h-7M2 25v-7h7M3 18c2 4 6 6.500 10.500 6.500" /><circle cx="19" cy="18.500" r="6.200" fill="#ff9800" stroke="none" /></Svg>
    </Slot>
    <Slot $w={26} />
    <Stack $w={36} $align="center"><Text $size={17} $weight={400} $drop={0}>ENG</Text><Text $size={17} $weight={400} $drop={0}>IN</Text></Stack>
    <Slot $w={24} $ml={27}>
      <Svg width={25} height={19} viewBox="0 0 25 19" fill="none" stroke="#fff" strokeWidth="2"><path d="M1 6.500a16 16 0 0 1 23 0M4.700 10.300a11 11 0 0 1 15.600 0M8.300 13.800a6 6 0 0 1 8.400 0" /><circle cx="12.500" cy="16.500" r="2" fill="#fff" stroke="none" /></Svg>
    </Slot>
    <Slot $w={25} $ml={11}>
      <Svg width={25} height={20} viewBox="0 0 25 20" fill="none" stroke="#fff" strokeWidth="1.7" strokeLinejoin="round"><path d="M1 6.500h4L10.500 1.500v17L5 13.500H1zM13 6.500c1.500 2 1.500 5 0 7" /><path d="M16 4c3 3.500 3 8.500 0 12M19.500 1.500c4.500 5 4.500 12 0 17" stroke="#666" /></Svg>
    </Slot>
    <Slot $w={25} $ml={11}>
      <Svg width={25} height={16} viewBox="0 0 25 16" fill="none" stroke="#fff" strokeWidth="1.7"><rect x="1" y="1" width="20" height="14" rx="3" /><rect x="4" y="3.700" width="11.500" height="8.600" rx="1" fill="#fff" stroke="none" /><path d="M23 5.500v5" strokeWidth="2.500" /></Svg>
    </Slot>
    <Stack $w={118} $align="flex-end" $up={2} style={{ marginRight: 29 }}>
      <Text $size={17} $weight={400} $drop={0}>09:46</Text>
      <Text $size={17} $weight={400} $ls={0.5} $drop={0}>18-02-2025</Text>
    </Stack>
  </TaskbarRoot>
);

export default function App() {
  return (
    <>
      <GlobalStyle />
      <Desktop>
        <BrowserTabs />
        <AddressBar />
        <Page>
          <TopNav />
          <Body>
            <SideNav />
            <Main>
              <BoardHeader />
              <Board />
            </Main>
          </Body>
        </Page>
        <WindowEdge />
        <Taskbar />
      </Desktop>
    </>
  );
}
